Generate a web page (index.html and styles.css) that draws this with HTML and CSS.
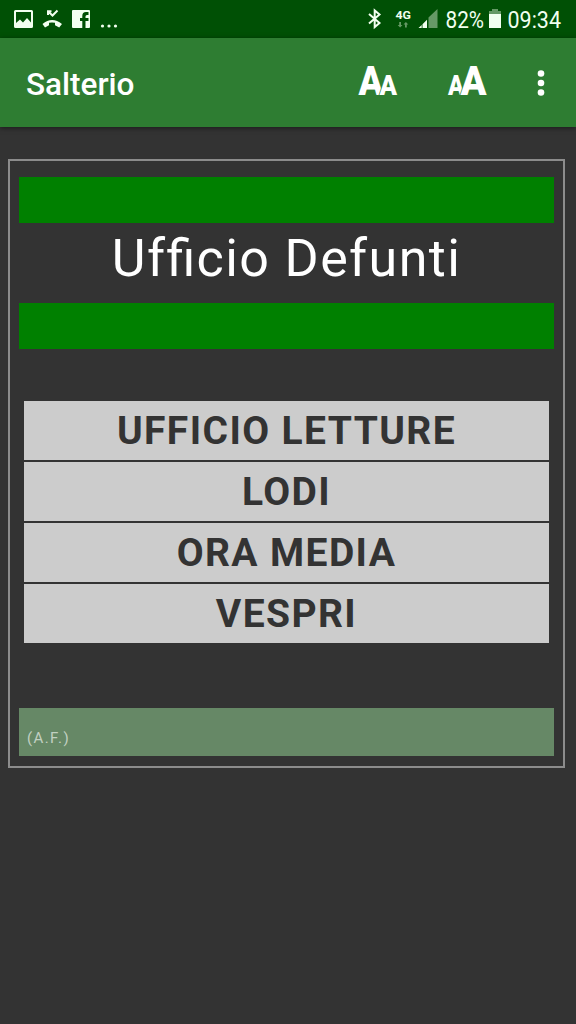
FILE: index.html
```
<!DOCTYPE html>
<html lang="it">
<head>
  <meta charset="UTF-8">
  <meta name="viewport" content="width=device-width, initial-scale=1.0">
  <title>Salterio</title>
  <link rel="stylesheet" href="styles.css">
</head>
<body>
  <!-- barra di stato -->
  <div class="status">
    <svg class="status-icons" width="120" height="38" viewBox="0 0 120 38">
      <path fill-rule="evenodd" d="M15.500 10h16q1.500 0 1.500 1.500v15q0 1.500-1.500 1.500h-16q-1.500 0-1.500-1.500v-15q0-1.500 1.500-1.500zM16 12v11l4-3.500 3 3 4-4.500 4 4.500V12z"/>
      <path d="M42.500 24q9.500-8 19.500 0l-2.800 3.400-4.200-2.100v-2.500q-3-.8-6 0v2.500l-4 2.100z"/>
      <path class="line" d="M48 15V11.300h3.500M48.500 11.800l4 3.700 5-5"/>
      <path fill-rule="evenodd" d="M73 10h16q1 0 1 1v16q0 1-1 1h-3.500v-7h3v-3h-3v-1.500q0-1.500 1.500-1.500h1.500v-3H86q-3.700 0-3.700 4v2H80v3h2.300v7H73q-1 0-1-1V11q0-1 1-1z"/>
      <circle cx="102.500" cy="26" r="1.600"/><circle cx="109" cy="26" r="1.600"/><circle cx="115.500" cy="26" r="1.600"/>
    </svg>
    <svg class="status-icons" width="226" height="38" viewBox="350 0 226 38">
      <path class="line" d="M369 14l10.500 9-4.800 4V10.500l4.800 4-10.500 9"/>
      <text class="net" x="395.500" y="18.500" textLength="15.500" lengthAdjust="spacingAndGlyphs">4G</text>
      <path class="dim" d="M399.200 22h1.800v3h1.500l-2.400 2.500-2.400-2.500h1.500zM405 27.500h1.800v-3h1.500l-2.400-2.500-2.400 2.500h1.500z"/>
      <path class="dim" d="M428.500 28V17.500L437.500 9v19z"/>
      <path d="M418.500 28l3.200-3v3zM422.500 28v-3.800l4.500-4.500V28z"/>
      <text class="info" x="445.500" y="27.700" textLength="38.500" lengthAdjust="spacingAndGlyphs">82%</text>
      <path class="dim" d="M492 9h6v2h3v4h-12v-4h3z"/>
      <path d="M489 14h12v14h-12z"/>
      <text class="info" x="507.500" y="27.700" textLength="53.500" lengthAdjust="spacingAndGlyphs">09:34</text>
    </svg>
  </div>

  <!-- barra dell'app -->
  <header class="appbar">
    <h1>Salterio</h1>
    <div class="actions">
      <svg width="42" height="40" viewBox="0 0 42 40">
        <text class="big" x="1.500" y="32" textLength="24.500" lengthAdjust="spacingAndGlyphs">A</text>
        <text class="small" x="22.500" y="32" textLength="17.500" lengthAdjust="spacingAndGlyphs">A</text>
      </svg>
      <svg width="42" height="40" viewBox="0 0 42 40">
        <text class="small" x="1" y="32" textLength="16" lengthAdjust="spacingAndGlyphs">A</text>
        <text class="big" x="13.500" y="32" textLength="26" lengthAdjust="spacingAndGlyphs">A</text>
      </svg>
      <svg width="8" height="40" viewBox="0 0 8 40">
        <circle cx="4" cy="10.500" r="3.300"/><circle cx="4" cy="20" r="3.300"/><circle cx="4" cy="29.500" r="3.300"/>
      </svg>
    </div>
  </header>

  <main class="page">
    <div class="bar"></div>
    <h2><span class="split">Uf</span>ficio Defunti</h2>
    <div class="bar"></div>
    <nav class="menu">
      <a>UFFICIO LETTURE</a>
      <a>LODI</a>
      <a>ORA MEDIA</a>
      <a>VESPRI</a>
    </nav>
    <footer>(A.F.)</footer>
  </main>
</body>
</html>
```
FILE: styles.css
```
* {
  box-sizing: border-box;
}
body {
  font-family: Roboto, sans-serif;
  background: #333;
  color: #fff;
  margin: 0;
  height: 100vh;
  overflow: hidden;
}
svg {
  display: block;
  fill: #fff;
  overflow: visible;
}
.status {
  display: flex;
  justify-content: space-between;
  height: 38px;
  background: #005005;
}
.status-icons {
  fill: #f2fff0;
}
.line {
  fill: none;
  stroke: #f2fff0;
  stroke-width: 2;
}
.dim {
  fill: #669966;
}
.net {
  font-size: 11.5px;
  font-weight: bold;
}
.info {
  font-size: 24px;
}
.appbar {
  display: flex;
  justify-content: space-between;
  align-items: center;
  height: 89px;
  padding: 0 31px 0 26px;
  background: #2e7d32;
  box-shadow: 0 1px 5px rgba(0, 0, 0, 0.5);
}
h1 {
  margin: 4px 0 0;
  font-size: 31.5px;
  font-weight: 500;
}
.actions {
  display: flex;
  gap: 48px;
}
.actions text {
  font-weight: 900;
  stroke: #2e7d32;
  stroke-width: 1.5px;
  paint-order: stroke;
}
.big {
  font-size: 40px;
}
.small {
  font-size: 27.5px;
}
.page {
  width: 557px;
  height: 609px;
  margin: 32px 0 0 8px;
  padding: 16px 9px 0;
  border: 2px solid #8c8c8c;
  letter-spacing: 1.4px;
}
.bar {
  height: 46px;
  background: #008000;
}
h2 {
  margin: 0;
  height: 80px;
  line-height: 71px;
  font-size: 52px;
  font-weight: 400;
  text-align: center;
  font-feature-settings: "liga" 1;
}
.split {
  font-feature-settings: "liga" 0;
}
.menu {
  display: grid;
  gap: 2px;
  margin: 52px 5px 65px;
}
.menu a {
  height: 59px;
  line-height: 60px;
  background: #ccc;
  color: #333;
  font-size: 39px;
  font-weight: bold;
  text-align: center;
}
footer {
  height: 48px;
  padding: 21px 8px 0;
  background: #668866;
  color: #c2d0c2;
  font-size: 15px;
  line-height: 18px;
}
```
